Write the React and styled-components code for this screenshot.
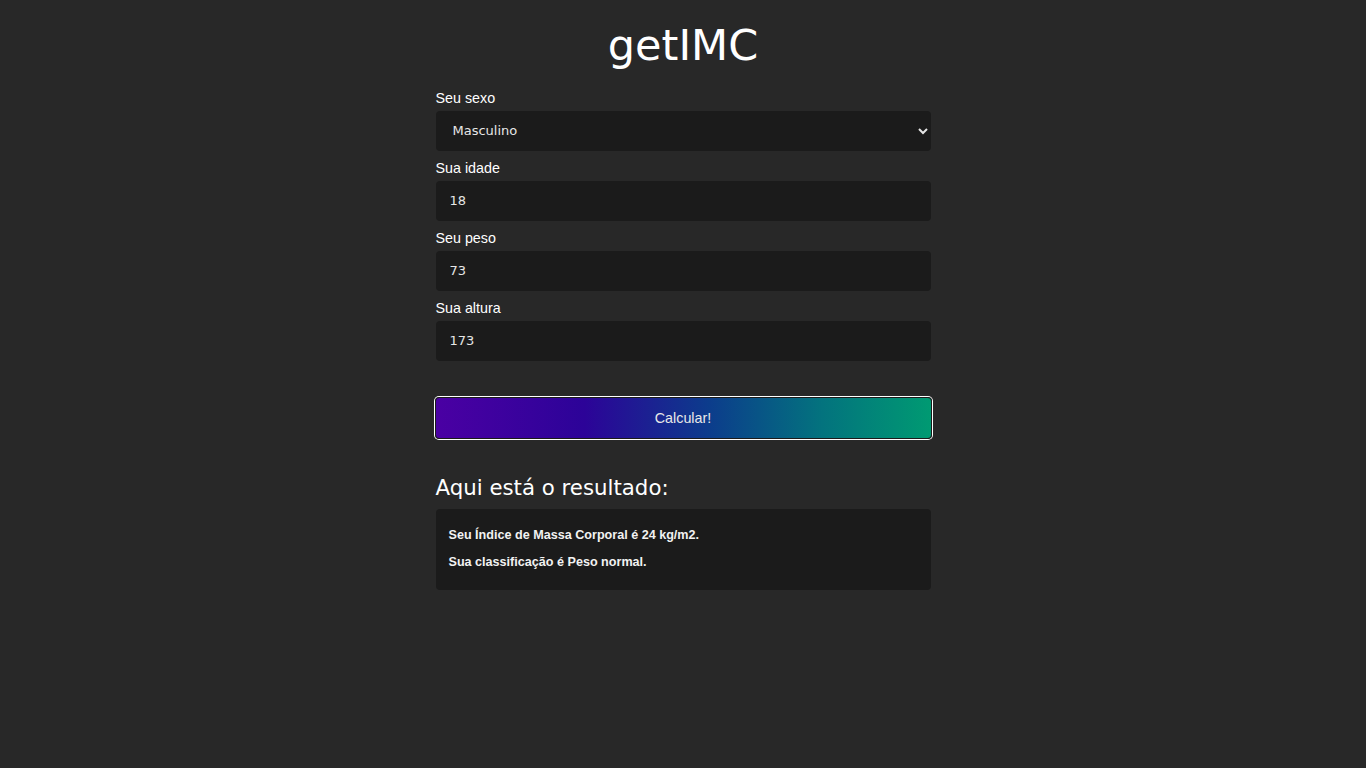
import React from "react";
import styled, { createGlobalStyle } from "styled-components";

const Global = createGlobalStyle`
  html, body { margin: 0; padding: 0; background: #282828; }
  body { font-family: "Liberation Sans", Arial, sans-serif; color: #fff; }
  * { box-sizing: border-box; }
`;

const Page = styled.main`
  width: 495px;
  margin: 0 auto;
  display: flex;
  flex-direction: column;
  padding-top: 20px;
`;

const Title = styled.h1`
  margin: 0;
  text-align: center;
  font-family: "DejaVu Sans", sans-serif;
  font-weight: 500;
  font-size: 43px;
  line-height: 50px;
  color: #fff;
`;

const Form = styled.form`
  display: flex;
  flex-direction: column;
  margin-top: 19px;
`;

const Label = styled.label`
  display: block;
  font-size: 14.3px;
  line-height: 18px;
  margin: ${(p) => (p.$first ? "0" : "8px")} 0 4px;
  color: #fff;
`;

const fieldBase = `
  width: 100%;
  height: 40px;
  border: none;
  border-radius: 4px;
  background: #1b1b1b;
  color: #e6e6e6;
  font-family: "DejaVu Sans", sans-serif;
  font-size: 13px;
  line-height: 38px;
  padding-bottom: 2px;
  outline: none;
`;

const Select = styled.select`
  ${fieldBase}
  padding: 0 8px 2px 13px;
  color-scheme: dark;
`;

const Input = styled.input`
  ${fieldBase}
  padding: 0 14px 2px;
`;

const Button = styled.button`
  margin-top: 36px;
  width: 497px;
  margin-left: -1px;
  height: 42px;
  border: 1px solid #1b1b1b;
  border-radius: 4px;
  box-shadow: 0 0 0 1px #fff;
  background: linear-gradient(to right, #4a00a3 0%, #2c0398 30%, #0c3c8c 55%, #03737e 78%, #009a72 100%);
  color: #e8e8e8;
  font-family: "Liberation Sans", Arial, sans-serif;
  font-size: 14.3px;
  cursor: pointer;
`;

const ResultTitle = styled.h2`
  margin: 34px 0 0;
  font-family: "DejaVu Sans", sans-serif;
  font-weight: 500;
  font-size: 21.3px;
  line-height: 30px;
  color: #fff;
`;

const ResultBox = styled.section`
  margin-top: 6px;
  background: #1b1b1b;
  border-radius: 4px;
  padding: 19px 13px 20px;
  display: flex;
  flex-direction: column;
  gap: 12px;
`;

const ResultLine = styled.p`
  margin: 0;
  font-weight: bold;
  font-size: 12.6px;
  line-height: 15px;
  color: #f2f2f2;
`;

export default function App() {
  return (
    <>
      <Global />
      <Page>
        <Title>getIMC</Title>
        <Form onSubmit={(e) => e.preventDefault()}>
          <Label $first htmlFor="sexo">Seu sexo</Label>
          <Select id="sexo" defaultValue="m">
            <option value="m">Masculino</option>
            <option value="f">Feminino</option>
          </Select>
          <Label htmlFor="idade">Sua idade</Label>
          <Input id="idade" defaultValue="18" />
          <Label htmlFor="peso">Seu peso</Label>
          <Input id="peso" defaultValue="73" />
          <Label htmlFor="altura">Sua altura</Label>
          <Input id="altura" defaultValue="173" />
          <Button type="submit">Calcular!</Button>
        </Form>
        <ResultTitle>Aqui está o resultado:</ResultTitle>
        <ResultBox>
          <ResultLine>Seu Índice de Massa Corporal é 24 kg/m2.</ResultLine>
          <ResultLine>Sua classificação é Peso normal.</ResultLine>
        </ResultBox>
      </Page>
    </>
  );
}
